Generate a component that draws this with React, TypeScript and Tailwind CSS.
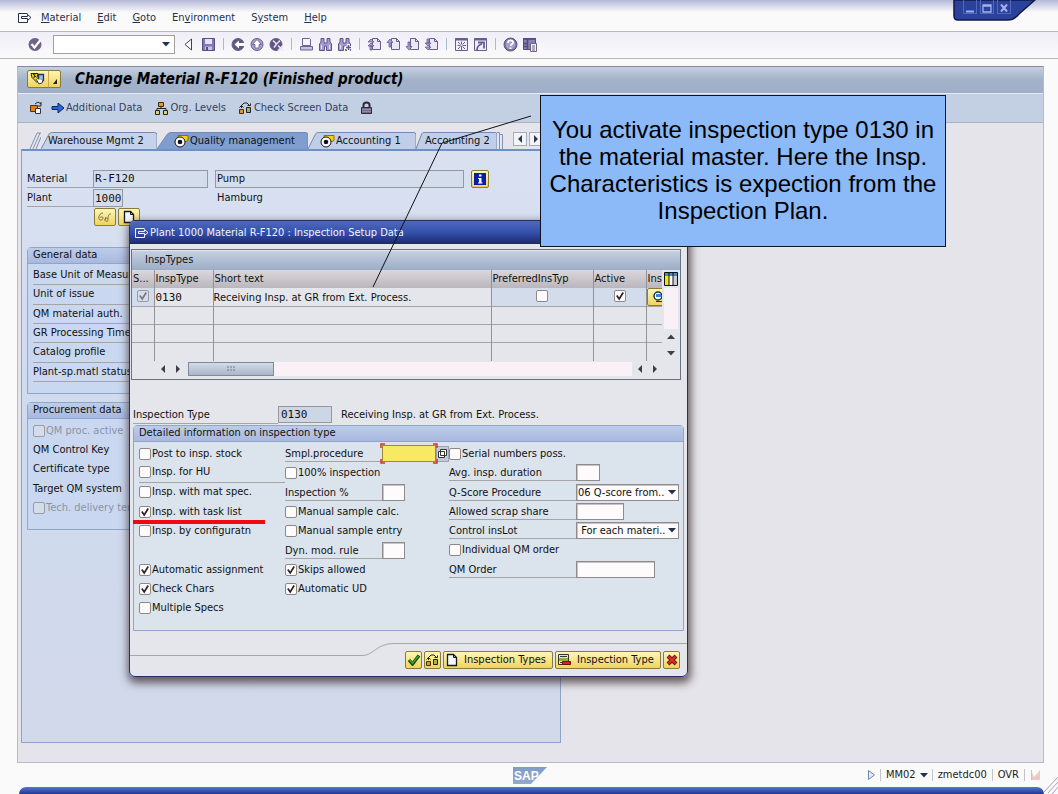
import { useId, useState, type ReactNode } from "react";
import clsx from "clsx";

const Icon = ({ children, w = 15, h = 15, className }: { children: ReactNode; w?: number; h?: number; className?: string }) => (
    <svg width={w} height={h} viewBox={`0 0 ${w} ${h}`} fill="none" className={clsx("shrink-0", className)} aria-hidden="true">
        {children}
    </svg>
);

const ExitIcon = ({ className }: { className?: string }) => (
    <Icon w={14} h={12} className={className}>
        <path d="M9.500 8.500v2h-9v-9h9M3.500 4.500h6v-2l3.500 3-3.500 3v-2h-6z" stroke="currentColor" />
    </Icon>
);

const CheckCircle = () => (
    <Icon>
        <circle cx="7" cy="7.500" r="6.500" fill="#6f6389" />
        <path d="M3.500 7l3 3.500L12.500 3" stroke="#fff" strokeWidth="2.200" />
    </Icon>
);

const Disk = () => (
    <Icon>
        <path d="M1.500 1.500h12v12h-12z" fill="#8478b4" stroke="#584d80" />
        <path d="M4 2h7v5H4z" fill="#e6e2f6" />
        <path d="M4 9.500h7V13H4z" fill="#c9c2e6" />
        <path d="M5 10h2v3H5z" fill="#584d80" />
    </Icon>
);

const NavCircle = ({ kind }: { kind: "back" | "up" | "cancel" }) => (
    <Icon>
        <circle cx="7" cy="7.500" r="6" fill={kind === "up" ? "#aaa0cc" : "#63577f"} stroke="#675b8c" />
        {kind === "back" && <path d="M14 6H8V3.500L3.500 7.500 8 11.500V9h6z" fill="#fff" />}
        {kind === "up" && <path d="M7 2.500L2.500 7.500H5V11h4V7.500h2.500z" fill="#fff" stroke="#675b8c" strokeWidth=".8" />}
        {kind === "cancel" && <path d="M4 3.500l3.500 3.500L11 3.500M7.500 7L5 10.500M9 8.500l5 5M9 13.500l5-5" stroke="#e9e5f7" strokeWidth="1.500" />}
    </Icon>
);

const Printer = () => (
    <Icon>
        <path d="M3.500 1.500h7l1 1v6h-8z" fill="#f6f3fd" stroke="#6f6490" />
        <path d="M1.500 9.500h12v3.500h-12z" fill="#c7bfe3" stroke="#6f6490" />
    </Icon>
);

const Binoculars = ({ plus }: { plus?: boolean }) => (
    <Icon>
        <path d="M3 1.500h3V6h3V1.500h3V5l1.500 2v6.500h-5V9h-2v4.500h-5V7L3 5z" fill="#a79cd0" stroke="#5f5388" />
        <path d="M3.500 8v4M11.500 8v4" stroke="#e8e3f8" />
        {plus && <path d="M11.500 7v7M8 10.500h7" stroke="#fff" strokeWidth="3" />}
        {plus && <path d="M11.500 8v5M9 10.500h5" stroke="#5f5388" strokeWidth="1.500" />}
    </Icon>
);

const PageIcon = ({ kind }: { kind: "first" | "prev" | "next" | "last" }) => (
    <Icon>
        <path d="M5.500 1.500h5l3 3v8h-8z" fill="#ebe7f7" stroke="#695d90" />
        <path d="M10.500 1.500v3h3" stroke="#695d90" />
        {kind === "first" && <path d="M1 5l3-3 3 3zM1 9l3-3 3 3zM3 9h2v4H3z" fill="#a99fd2" stroke="#695d90" strokeWidth=".8" />}
        {kind === "prev" && <path d="M1 5.500L4 2l3 3.500H5V10H3V5.500z" fill="#a99fd2" stroke="#695d90" strokeWidth=".8" />}
        {kind === "next" && <path d="M1 9.500L4 13l3-3.500H5V5H3v4.500z" fill="#a99fd2" stroke="#695d90" strokeWidth=".8" />}
        {kind === "last" && <path d="M1 10l3 3 3-3zM1 6l3 3 3-3zM3 2h2v4H3z" fill="#a99fd2" stroke="#695d90" strokeWidth=".8" />}
    </Icon>
);

const SessionIcon = ({ shortcut }: { shortcut?: boolean }) => (
    <Icon>
        <path d="M1.500 1.500h12v12h-12z" fill="#f1eefa" stroke="#695d90" />
        <path d="M1 2.500h13" stroke="#695d90" strokeWidth="2" />
        {shortcut ? (
            <path d="M4 13c0-3 1-5 5-6M5 5.500h6v6" stroke="#695d90" strokeWidth="1.800" />
        ) : (
            <path d="M7.500 4.500v3M7.500 9v4M3.500 8.500h3M8.500 8.500h3.500M4 5l2.500 2.500M11 5L8.500 7.500M4 12l2.500-2.500M11 12L8.500 9.500" stroke="#695d90" />
        )}
    </Icon>
);

const HelpIcon = () => (
    <Icon>
        <circle cx="7.500" cy="7.500" r="6.500" fill="#7d719f" stroke="#5c5080" />
        <circle cx="7.500" cy="7.500" r="4.800" fill="#a89dcb" />
        <path d="M5 6c0-3.500 5-3.500 5-.5C10 7.500 7.500 7 7.500 9M7.500 10.500V12" stroke="#fff" strokeWidth="1.800" />
    </Icon>
);

const LayoutIcon = () => (
    <Icon>
        <path d="M1.500 1.500h12v11h-12z" fill="#8b7fb9" stroke="#554a78" />
        <path d="M1 2h13M5.500 2v11M2 6.500h3M2 9.500h3" stroke="#554a78" strokeWidth="1.500" />
        <path d="M8.500 6.500h6v8h-6z" fill="#f4f1e6" stroke="#6b6480" />
        <path d="M10 9h3M10 11h3M10 13h3" stroke="#6b6480" />
    </Icon>
);

const HatIcon = () => (
    <Icon w={16} h={14}>
        <path d="M1 1.500h7l-1 4 2 2-2 3-5-5z" fill="#f0d21f" stroke="#2a2a18" />
        <path d="M3 2l3 3M5 1.500L4 6" stroke="#2a2a18" />
        <path d="M8.500 2.500h5v6h-5z" fill="#9cb8e8" stroke="#20335c" strokeWidth="1.300" />
        <path d="M6 7l3 5 3-1 1-3" fill="#fff" stroke="#3c3c3c" />
    </Icon>
);

const OtherMaterialIcon = () => (
    <Icon w={14} h={14}>
        <path d="M1.500 4.500h7v6h-7z" fill="#e0801a" stroke="#5a2f08" />
        <path d="M6.500 7.500h5v5h-5z" fill="#f5f7fa" stroke="#333" />
        <path d="M6 3l3-2 3 2M12 1v4h-3" stroke="#222" />
    </Icon>
);

const ArrowIcon = () => (
    <Icon w={14} h={12}>
        <path d="M1 4.500h6V1l6 5-6 5V7.500H1z" fill="#2a66dc" stroke="#0f245c" />
    </Icon>
);

const OrgIcon = () => (
    <Icon w={15} h={13}>
        <path d="M7 4v3M3 8V6.500h9V8" stroke="#222" />
        <path d="M4.500.5h5v4h-5z" fill="#e69a23" stroke="#3a2a0c" />
        <path d="M1.500 8.500h4v4h-4z" fill="#d9cf7c" stroke="#222" />
        <path d="M9.500 8.500h4v4h-4z" fill="#d9cf7c" stroke="#222" />
    </Icon>
);

const CheckScreenIcon = () => (
    <Icon w={15} h={14}>
        <path d="M1.500 8.500h4v4h-4z" fill="#e0962b" stroke="#4a2d08" />
        <path d="M8.500 6.500h4v5h-4z" fill="#a8b05a" stroke="#222" />
        <path d="M3.500 7V4.500L6 2h3l2.500 2.500M1.500 6.500l2-2 2 2M9.500 4.500h3v-2" stroke="#222" />
    </Icon>
);

const LockIcon = () => (
    <Icon w={13} h={14}>
        <path d="M3.500 7V4c0-3.500 6-3.500 6 0v3" stroke="#2f2a35" strokeWidth="2" />
        <path d="M1.500 6.500h10v6h-10z" fill="#746a8d" stroke="#2f2a35" />
        <path d="M2 8.500h9M2 10.500h9" stroke="#958bab" />
    </Icon>
);

const TabFlag = () => (
    <Icon w={16} h={14}>
        <path d="M4 1.500h10v5l-2 1H5z" fill="#f5cf16" stroke="#8b7004" />
        <circle cx="6" cy="8" r="5" fill="#fff" stroke="#111" />
        <circle cx="6" cy="8" r="2.300" fill="#111" />
    </Icon>
);

const PaperIcon = () => (
    <Icon w={12} h={14}>
        <path d="M1.500 1.500h6l3 3v8h-9z" fill="#f4f8ff" stroke="#16181d" strokeWidth="1.300" />
        <path d="M7.500 1.500v3h3" stroke="#16181d" />
    </Icon>
);

const Triangle = ({ dir, className }: { dir: "down" | "up" | "left" | "right"; className?: string }) => (
    <svg width="8" height="8" viewBox="0 0 8 8" className={clsx("shrink-0 fill-current", className)} aria-hidden="true">
        {dir === "down" && <path d="M0 2h8L4 6.500z" />}
        {dir === "up" && <path d="M0 6h8L4 1.500z" />}
        {dir === "left" && <path d="M6 0v8L2 4z" />}
        {dir === "right" && <path d="M2 0v8l4-4z" />}
    </svg>
);

const Separator = () => <span className="mx-[3px] h-3 w-px bg-[#a9bdd2]" />;

const ToolButton = ({ label, children }: { label: string; children: ReactNode }) => (
    <button type="button" aria-label={label} className="flex h-4 items-center">
        {children}
    </button>
);

const Check = ({ label, checked = false, disabled, hideLabel }: { label: string; checked?: boolean; disabled?: boolean; hideLabel?: boolean }) => {
    const [on, setOn] = useState(checked);
    return (
        <label className={clsx("inline-flex items-center gap-px whitespace-nowrap", disabled && "text-[#8b94a5]")}>
            <span className="grid h-3 w-3 shrink-0 place-items-center">
                <input
                    type="checkbox"
                    checked={on}
                    disabled={disabled}
                    aria-label={hideLabel ? label : undefined}
                    onChange={(e) => setOn(e.target.checked)}
                    className={clsx(
                        "col-start-1 row-start-1 h-3 w-3 appearance-none rounded-xs border",
                        disabled ? "border-[#9a9ba3] bg-[#d5ddea]" : "border-[#8f8686] bg-[#fdfbfc]"
                    )}
                />
                {on && (
                    <svg viewBox="0 0 10 10" className="pointer-events-none col-start-1 row-start-1 h-[10px] w-[10px]" aria-hidden="true">
                        <path d="M1.800 4.500l2.400 3.500 4-6.500" fill="none" stroke={disabled ? "#77777f" : "#2e2229"} strokeWidth="1.700" />
                    </svg>
                )}
            </span>
            {!hideLabel && label}
        </label>
    );
};

const boxClass = "h-[17px] border border-[#8f8a8c] bg-[#fdfbfc] px-1 shadow-[inset_1px_1px_0_#c9c4c6]";
const lineClass = "border-b border-[#a8a3a6]";

const Field = ({ label, labelClass, inputClass }: { label: string; labelClass: string; inputClass: string }) => {
    const id = useId();
    return (
        <div className="flex items-center">
            <label htmlFor={id} className={clsx("h-[17px] leading-[17px]", lineClass, labelClass)}>{label}</label>
            <input id={id} className={clsx(boxClass, inputClass)} />
        </div>
    );
};

const SelectField = ({ label, value }: { label: string; value: string }) => {
    const id = useId();
    return (
        <div className="flex items-center">
            <label htmlFor={id} className={clsx("h-[17px] w-[127px] leading-[17px]", lineClass)}>{label}</label>
            <div className="relative">
                <select id={id} className="block h-[17px] w-[103px] appearance-none border border-[#8f8a8c] bg-[#fdfbfc] pr-[11px] pl-px leading-[15px] shadow-[inset_1px_1px_0_#c9c4c6]">
                    <option>{value}</option>
                </select>
                <Triangle dir="down" className="pointer-events-none absolute top-1 right-[3px] text-[#23304f]" />
            </div>
        </div>
    );
};

const yellowButton = "flex h-[18px] items-center justify-center rounded-xs border border-[#8a7a3c] bg-linear-to-b from-[#fdf6b4] to-[#f0d458]";

const generalRows = ["Base Unit of Measure", "Unit of issue", "QM material auth.", "GR Processing Time", "Catalog profile", "Plant-sp.matl status"];

const GroupBox = ({ title, children, className }: { title: string; children: ReactNode; className?: string }) => (
    <section className={clsx("rounded-t-sm border border-[#8fa5c9]", className)}>
        <h2 className="h-4 border-b border-[#8fa5c9] bg-linear-to-b from-[#bccde9] to-[#a9b8df] px-[5px] leading-[14px]">{title}</h2>
        {children}
    </section>
);

const Tab = ({ label, flag, active, first, className }: { label: string; flag?: boolean; active?: boolean; first?: boolean; className: string }) => (
    <button type="button" role="tab" aria-selected={!!active} className={clsx("relative flex h-[17px] shrink-0 items-center", className)}>
        <svg viewBox="0 0 100 18" preserveAspectRatio="none" className="absolute inset-0 h-full w-full" aria-hidden="true">
            <path
                d="M0 18L7 2Q8 .500 10 .500H98Q100 .500 100 3V18"
                fill={active ? "#7f9ecf" : first ? "#c5d3ea" : "#c0cfe7"}
                stroke="#7088b0"
                vectorEffect="non-scaling-stroke"
            />
        </svg>
        <span className="relative flex items-center">
            {flag && <TabFlag />}
            {label}
        </span>
    </button>
);

const MaterialScreen = () => (
    <div className="flex w-[540px] max-w-full flex-1 flex-col border border-t-2 border-[#8ea4c6] border-t-[#6f90c3] bg-linear-to-b from-[#d9e1f1] via-[#cfdaee] to-[#d1d9ea] px-[5px]">
        <div className="mt-[18px] flex h-[19px] items-center">
            <label htmlFor="material" className={clsx("h-[18px] w-[66px] leading-[18px]", lineClass)}>Material</label>
            <input id="material" readOnly defaultValue="R-F120" className="h-[18px] w-[115px] border border-[#9a979c] bg-[#d4ddeb] px-px font-['DejaVu_Sans_Mono',monospace]" />
            <input aria-label="Description" readOnly defaultValue="Pump" className="ml-[7px] h-[18px] w-[249px] border border-[#9a979c] bg-[#d4ddeb] px-px" />
            <button type="button" aria-label="Information" className={clsx(yellowButton, "ml-[7px] w-[18px]")}>
                <Icon w={12} h={12}>
                    <path d="M0 0h12v12H0z" fill="#0a1fa8" />
                    <path d="M5 1.500h2.500v2H5zM4 5h3.500v4.500h1v1H4v-1h1V6H4z" fill="#fff" />
                </Icon>
            </button>
        </div>
        <div className="flex h-5 items-center">
            <label htmlFor="plant" className={clsx("h-[18px] w-[66px] leading-[18px]", lineClass)}>Plant</label>
            <input id="plant" readOnly defaultValue="1000" className="h-[18px] w-[30px] border border-[#9a979c] bg-[#d4ddeb] px-px font-['DejaVu_Sans_Mono',monospace]" />
            <span className="ml-[94px]">Hamburg</span>
        </div>
        <div className="ml-[67px] flex gap-[2px]">
            <button type="button" aria-label="Display" className={clsx(yellowButton, "w-[22px]")}>
                <Icon w={16} h={12}>
                    <path d="M6 2C3 2 1 6 2 8s4 1 4-1-3-1-3 0M8 9c0 2 3 2 3 0s-3-3-3 0l1-3M11 8c0-4 1-5 3-5" stroke="#777055" />
                </Icon>
            </button>
            <button type="button" aria-label="Create" className={clsx(yellowButton, "w-[22px]")}>
                <PaperIcon />
            </button>
        </div>
        <GroupBox title="General data" className="mt-[21px] h-[147px] bg-[#c9d8f0]">
            <div className="mt-[2px] ml-[5px] grid h-[116px] w-[96px] auto-rows-fr">
                {generalRows.map((row) => (
                    <div key={row} className={clsx("flex items-center overflow-hidden whitespace-nowrap", lineClass)}>{row}</div>
                ))}
            </div>
        </GroupBox>
        <GroupBox title="Procurement data" className="mt-2 h-[128px] bg-[#c9d8f0]">
            <div className="mt-[2px] ml-[5px] grid h-[97px] auto-rows-fr items-center">
                <Check label="QM proc. active" disabled />
                <span>QM Control Key</span>
                <span>Certificate type</span>
                <span>Target QM system</span>
                <Check label="Tech. delivery terms" disabled />
            </div>
        </GroupBox>
    </div>
);

const InspectionTable = () => (
    <div className="mx-[1px] mt-[5px] h-[131px] w-[550px] border border-[#6a7280] py-px">
        <div className="h-[19px] bg-linear-to-b from-[#c6d0e0] to-[#9badc6] pl-[13px] leading-[18px]">InspTypes</div>
        <div className="flex">
            <table className="w-[530px] table-fixed border-collapse text-left">
                <colgroup>
                    <col className="w-[22px]" />
                    <col className="w-[59px]" />
                    <col className="w-[278px]" />
                    <col className="w-[102px]" />
                    <col className="w-[53px]" />
                    <col className="w-4" />
                </colgroup>
                <thead>
                    <tr className="h-[18px] bg-linear-to-b from-[#dbd7dc] to-[#b9b6bd]">
                        {["S...", "InspType", "Short text", "PreferredInsTyp", "Active", "Ins"].map((h) => (
                            <th key={h} className="overflow-hidden border-r border-[#92929a] px-px font-normal whitespace-nowrap last:border-0">{h}</th>
                        ))}
                    </tr>
                </thead>
                <tbody>
                    <tr className="h-[18px] border-b border-[#a3a3aa]">
                        <td className="border-r border-[#92929a] bg-[#d3dcea] text-center leading-none"><Check label="Selected" hideLabel checked disabled /></td>
                        <td className="border-r border-[#92929a] px-px font-['DejaVu_Sans_Mono',monospace] leading-none">0130</td>
                        <td className="border-r border-[#92929a] leading-none">Receiving Insp. at GR from Ext. Process.</td>
                        <td className="border-r border-[#92929a] bg-[#d3dcea] text-center leading-none"><Check label="Preferred" hideLabel /></td>
                        <td className="border-r border-[#92929a] bg-[#d3dcea] text-center leading-none"><Check label="Active" hideLabel checked /></td>
                        <td className="overflow-hidden leading-none">
                            <button type="button" aria-label="Details" className={clsx(yellowButton, "h-4 w-5 justify-start pl-1")}>
                                <Icon w={14} h={14}>
                                    <circle cx="6" cy="6" r="4" fill="#fff" stroke="#16324a" strokeWidth="1.500" />
                                    <path d="M4 4h5v3H4z" fill="#3a86c8" />
                                    <path d="M4 11.500h6" stroke="#16324a" />
                                </Icon>
                            </button>
                        </td>
                    </tr>
                    {[1, 2, 3].map((n) => (
                        <tr key={n} className="h-[18px] border-b border-[#a3a3aa] last:border-0">
                            <td className="border-r border-[#92929a]" />
                            <td className="border-r border-[#92929a]" />
                            <td className="border-r border-[#92929a]" />
                            <td className="border-r border-[#92929a]" />
                            <td className="border-r border-[#92929a]" />
                            <td />
                        </tr>
                    ))}
                </tbody>
            </table>
            <div className="ml-[2px] flex w-[14px] flex-col items-center text-[#3d3f48]">
                <button type="button" aria-label="Configure columns" className="flex h-[18px] items-center">
                    <Icon w={14} h={14}>
                        <path d="M.500.500h13v13H.500z" fill="#fff" stroke="#111" />
                        <path d="M1 1h12v3H1z" fill="#4a86c6" />
                        <path d="M1 4h4v9H1z" fill="#f2e21c" />
                        <path d="M9 4h4v9H9z" fill="#c8ccd8" />
                        <path d="M5 1v12M9 1v12" stroke="#111" />
                    </Icon>
                </button>
                <div className="w-full flex-1 bg-[#faf1f7]" />
                <button type="button" aria-label="Scroll up" className="flex h-4 items-center"><Triangle dir="up" /></button>
                <button type="button" aria-label="Scroll down" className="flex h-4 items-center"><Triangle dir="down" /></button>
            </div>
        </div>
        <div className="mt-px mr-[18px] flex h-[14px] items-center pl-[23px] text-[#3d3f48]">
            <button type="button" aria-label="First column" className="flex w-[15px] justify-center"><Triangle dir="left" /></button>
            <button type="button" aria-label="Column left" className="flex w-[15px] justify-center"><Triangle dir="right" /></button>
            <div className="ml-[3px] flex h-[14px] flex-1 bg-[#faf1f7]">
                <div className="flex w-[86px] items-center justify-center border border-[#80899a] bg-linear-to-b from-[#d3dbe6] to-[#a9b7ca]">
                    <Icon w={8} h={5}>
                        <path d="M0 1h8M0 4h8" stroke="#6c7a92" strokeDasharray="2 1" />
                    </Icon>
                </div>
            </div>
            <button type="button" aria-label="Column right" className="flex w-[15px] justify-center"><Triangle dir="left" /></button>
            <button type="button" aria-label="Last column" className="flex w-[15px] justify-center"><Triangle dir="right" /></button>
        </div>
    </div>
);

const InspectionDialog = () => (
    <div role="dialog" aria-label="Inspection Setup Data" className="absolute top-[220px] left-[129px] flex h-[457px] w-[559px] flex-col overflow-hidden rounded-md border border-[#25315f] bg-[#e5e6eb]">
        <div className="flex h-[23px] shrink-0 items-center gap-px bg-linear-to-b from-[#5069bd] via-[#3450aa] to-[#1c2a6e] pl-[5px] text-[#f1f3fb]">
            <ExitIcon />
            Plant 1000 Material R-F120 : Inspection Setup Data
        </div>
        <InspectionTable />
        <div className="mt-[25px] ml-[3px] flex h-[19px] items-center">
            <label htmlFor="insp-type" className={clsx("h-[18px] w-[145px] leading-[18px]", lineClass)}>Inspection Type</label>
            <input id="insp-type" readOnly defaultValue="0130" className="h-[17px] w-[54px] border border-[#9a979c] bg-[#ccd6e5] px-[2px] font-['DejaVu_Sans_Mono',monospace]" />
            <span className="ml-[9px]">Receiving Insp. at GR from Ext. Process.</span>
        </div>
        <div className="relative mx-[3px] mt-px">
            <GroupBox title="Detailed information on inspection type" className="h-[206px] bg-[#dbe3ec]">
                <div className="mt-[2px] ml-[5px] grid grid-cols-[146px_164px_1fr]">
                    <div className="grid h-[174px] grid-rows-9 items-center">
                        <Check label="Post to insp. stock" />
                        <div className={clsx("flex items-center self-stretch", lineClass)}><Check label="Insp. for HU" /></div>
                        <Check label="Insp. with mat spec." />
                        <Check label="Insp. with task list" checked />
                        <Check label="Insp. by configuratn" />
                        <span />
                        <Check label="Automatic assignment" checked />
                        <Check label="Check Chars" checked />
                        <Check label="Multiple Specs" />
                    </div>
                    <div className="grid h-[174px] grid-rows-9 items-center">
                        <div className="flex items-center">
                            <label htmlFor="smpl" className={clsx("h-[17px] w-[97px] leading-[17px]", lineClass)}>Smpl.procedure</label>
                            <div className="relative flex">
                                <input id="smpl" className="h-[17px] w-[54px] border border-[#a5843a] bg-[#f8e965] px-1" />
                                <svg viewBox="0 0 58 21" className="pointer-events-none absolute -top-[2px] -left-[2px] h-[21px] w-[58px]" aria-hidden="true">
                                    <path d="M5 1H1v4M53 1h4v4M5 20H1v-4M53 20h4v-4" fill="none" stroke="#d8332c" strokeWidth="1.500" />
                                </svg>
                            </div>
                            <button type="button" aria-label="Search help" className="flex h-4 w-[13px] items-center justify-center border border-[#9da3b5] bg-[#c2c9d8]">
                                <Icon w={11} h={11}>
                                    <path d="M3.500 1.500h6v6h-6zM1.500 3.500h6v6h-6z" fill="#fff" stroke="#333" />
                                </Icon>
                            </button>
                        </div>
                        <Check label="100% inspection" />
                        <Field label="Inspection %" labelClass="w-[97px]" inputClass="w-[23px]" />
                        <Check label="Manual sample calc." />
                        <Check label="Manual sample entry" />
                        <Field label="Dyn. mod. rule" labelClass="w-[97px]" inputClass="w-[23px]" />
                        <Check label="Skips allowed" checked />
                        <Check label="Automatic UD" checked />
                    </div>
                    <div className="grid h-[174px] grid-rows-9 items-center">
                        <Check label="Serial numbers poss." />
                        <Field label="Avg. insp. duration" labelClass="w-[127px]" inputClass="w-6" />
                        <SelectField label="Q-Score Procedure" value="06 Q-score from.." />
                        <Field label="Allowed scrap share" labelClass="w-[127px]" inputClass="w-12" />
                        <SelectField label="Control insLot" value={"\u00a0For each materi.."} />
                        <Check label="Individual QM order" />
                        <Field label="QM Order" labelClass="w-[127px]" inputClass="w-[79px]" />
                    </div>
                </div>
            </GroupBox>
            {/* highlight under the task list option */}
            <span className="absolute top-[95px] left-0 h-1 w-[132px] bg-[#ee0a0e]" />
        </div>
        <div className="relative flex flex-1 items-center justify-end gap-[2px] pt-3 pr-[7px]">
            <svg viewBox="0 0 557 14" preserveAspectRatio="none" className="absolute top-3 left-0 h-[14px] w-full" aria-hidden="true">
                <path d="M0 12.500h232c12 0 14-12 32-12h293" fill="none" stroke="#a3a7b0" />
            </svg>
            <button type="button" aria-label="Continue" className={clsx(yellowButton, "relative w-[17px]")}>
                <Icon w={14} h={13}>
                    <path d="M2 7l3.500 4L12 2.500" stroke="#1e4d12" strokeWidth="3.400" />
                    <path d="M2.500 7l3 3.200L11.500 3" stroke="#3fa32c" strokeWidth="1.400" />
                </Icon>
            </button>
            <button type="button" aria-label="Check" className={clsx(yellowButton, "relative w-[17px]")}>
                <CheckScreenIcon />
            </button>
            <button type="button" className={clsx(yellowButton, "relative w-[110px] justify-start gap-[6px] pl-[2px]")}>
                <PaperIcon />
                Inspection Types
            </button>
            <button type="button" className={clsx(yellowButton, "relative w-[106px] justify-start gap-[6px] pl-px")}>
                <Icon w={14} h={14}>
                    <path d="M1.500 1.500h10v10h-10z" fill="#dbe7e8" stroke="#333" />
                    <path d="M3 3.500h7M3 9.500h3" stroke="#333" />
                    <path d="M2 5h9v3H2z" fill="#8daf3d" />
                    <path d="M5.500 8.500h8v3h-8z" fill="#d7241e" stroke="#70100d" />
                </Icon>
                Inspection Type
            </button>
            <button type="button" aria-label="Cancel" className={clsx(yellowButton, "relative w-[17px]")}>
                <Icon w={12} h={12}>
                    <path d="M2 2l8 8M10 2l-8 8" stroke="#6d0e10" strokeWidth="4" />
                    <path d="M2.500 2.500l7 7M9.500 2.500l-7 7" stroke="#e0302c" strokeWidth="2" />
                </Icon>
            </button>
        </div>
    </div>
);

const menus = [
    ["", "M", "aterial"],
    ["", "E", "dit"],
    ["", "G", "oto"],
    ["En", "v", "ironment"],
    ["S", "y", "stem"],
    ["", "H", "elp"],
];

const actionClass = "flex items-center gap-px text-[#33405c]";

export default function App() {
    return (
        <div className="relative flex min-h-screen flex-col overflow-hidden bg-[#fbfafa] font-['DejaVu_Sans_Condensed','DejaVu_Sans',sans-serif] text-[11px] leading-[14px] text-[#111]">
            <nav className="flex h-8 items-center gap-4 border-b border-[#bcb9be] bg-linear-to-b from-[#b4b9d8] via-[#fbfafa] via-40% to-[#fbfafa] pt-1 pl-[18px] text-[#26304a]">
                <ExitIcon className="-mr-[7px]" />
                {menus.map(([before, key, after]) => (
                    <a key={key} href="#">
                        {before}<u>{key}</u>{after}
                    </a>
                ))}
            </nav>

            <div className="flex h-[27px] items-center gap-1 border-b border-[#bcb9be] bg-linear-to-b from-[#efedf7] to-[#fbfafa] pb-[2px] pl-[28px]">
                <ToolButton label="Enter"><CheckCircle /></ToolButton>
                <div className="mr-1 ml-[6px] flex h-[19px] w-[122px] items-center border border-[#a39f98] bg-white pr-1">
                    <input aria-label="Command" className="min-w-0 flex-1 px-1" />
                    <button type="button" aria-label="History" className="text-[#23304f]"><Triangle dir="down" /></button>
                </div>
                <ToolButton label="Hide command field">
                    <Icon w={10} h={13} className="mr-1"><path d="M8.500 1v11L2 6.500z" fill="#fdfdfd" stroke="#444" /></Icon>
                </ToolButton>
                <ToolButton label="Save"><Disk /></ToolButton>
                <Separator />
                <ToolButton label="Back"><NavCircle kind="back" /></ToolButton>
                <ToolButton label="Exit"><NavCircle kind="up" /></ToolButton>
                <ToolButton label="Cancel"><NavCircle kind="cancel" /></ToolButton>
                <Separator />
                <ToolButton label="Print"><Printer /></ToolButton>
                <ToolButton label="Find"><Binoculars /></ToolButton>
                <ToolButton label="Find next"><Binoculars plus /></ToolButton>
                <Separator />
                <ToolButton label="First page"><PageIcon kind="first" /></ToolButton>
                <ToolButton label="Previous page"><PageIcon kind="prev" /></ToolButton>
                <ToolButton label="Next page"><PageIcon kind="next" /></ToolButton>
                <ToolButton label="Last page"><PageIcon kind="last" /></ToolButton>
                <Separator />
                <ToolButton label="New session"><SessionIcon /></ToolButton>
                <ToolButton label="Create shortcut"><SessionIcon shortcut /></ToolButton>
                <Separator />
                <ToolButton label="Help"><HelpIcon /></ToolButton>
                <ToolButton label="Customize layout"><LayoutIcon /></ToolButton>
            </div>

            <main className="mt-[7px] mr-[14px] ml-[17px] flex flex-1 flex-col border border-[#b9b9c8] border-t-[#8a84a4] bg-[#e5e4ea]">
                <header className="flex h-[27px] items-center gap-[14px] border-b border-[#e6ecf4] bg-linear-to-b from-[#c5d0e2] via-[#a3b2c7] to-[#a0aecb] pb-[3px] pl-[9px]">
                    <button type="button" aria-label="Services" className={clsx(yellowButton, "w-[34px] gap-[2px]")}>
                        <HatIcon />
                        <span className="h-full w-px bg-[#c9ac4c]" />
                        <Icon w={8} h={12}><path d="M6 6v5H2z" fill="#222" /></Icon>
                    </button>
                    <h1 className="text-[15px] leading-[18px] font-bold whitespace-nowrap text-black italic">Change Material R-F120 (Finished product)</h1>
                </header>
                <div className="flex h-[29px] items-center border-b border-[#a8b4c6] bg-[#c3d0e4] pl-[11px]">
                    <button type="button" aria-label="Other material" className="mr-2"><OtherMaterialIcon /></button>
                    <button type="button" className={actionClass}><ArrowIcon />Additional Data</button>
                    <button type="button" className={clsx(actionClass, "ml-3")}><OrgIcon />Org. Levels</button>
                    <button type="button" className={clsx(actionClass, "ml-3")}><CheckScreenIcon />Check Screen Data</button>
                    <button type="button" aria-label="Lock" className="ml-3"><LockIcon /></button>
                </div>

                <div className="flex flex-1 flex-col pb-[19px] pl-[3px]">
                    <div role="tablist" className="mt-[9px] flex items-end">
                        <Icon w={12} h={17} className="ml-2">
                            <path d="M1 17L8 1h4M4 17L11 1M7 17L12 5" stroke="#7f93b5" />
                        </Icon>
                        <Tab label="Warehouse Mgmt 2" first className="w-[116px] pl-[7px]" />
                        <Tab label="Quality management" flag active className="w-[151px] pl-[17px]" />
                        <Tab label="Accounting 1" flag className="w-[108px] pl-[12px]" />
                        <Tab label="Accounting 2" className="w-[81px] pl-[9px]" />
                        <Icon w={6} h={17}>
                            <path d="M0 .500h2.500V17M2.500 2.500h3V17" stroke="#7f93b5" />
                        </Icon>
                        <div className="mb-[3px] ml-[10px] flex gap-[2px] text-[#333b4c]">
                            <button type="button" aria-label="Previous tab" className="flex h-[14px] w-[14px] items-center justify-center border border-[#a3aec2] bg-[#f2f4f9]"><Triangle dir="left" /></button>
                            <button type="button" aria-label="Next tab" className="flex h-[14px] w-[14px] items-center justify-center border border-[#a3aec2] bg-[#f2f4f9]"><Triangle dir="right" /></button>
                        </div>
                    </div>
                    <MaterialScreen />
                </div>
            </main>

            <footer className="relative flex h-6 items-center justify-end gap-1 pr-4 text-[#1b1b22]">
                <svg viewBox="0 0 35 17" className="absolute top-1 left-[513px] h-[17px] w-[35px]" aria-label="SAP">
                    <defs>
                        <linearGradient id="sap" x1="0" y1="0" x2="0" y2="1">
                            <stop offset="0" stopColor="#7f9cc9" />
                            <stop offset="1" stopColor="#93a9cc" />
                        </linearGradient>
                    </defs>
                    <path d="M0 0h34L18 17H0z" fill="url(#sap)" />
                    <text x="1" y="13" fontSize="12" fontWeight="bold" fontFamily="Liberation Sans, sans-serif" fill="#fff">SAP</text>
                </svg>
                <button type="button" aria-label="Expand status">
                    <Icon w={9} h={12}><path d="M1.500 1.500v9l6-4.500z" fill="#e4ecf8" stroke="#7286ab" /></Icon>
                </button>
                <span className="mr-px h-3 w-px bg-[#c5c3c8]" />
                <span>MM02</span>
                <Triangle dir="down" className="text-[#23304f]" />
                <span className="mr-px h-3 w-px bg-[#c5c3c8]" />
                <span>zmetdc00</span>
                <span className="mx-px h-3 w-px bg-[#c5c3c8]" />
                <span>OVR</span>
                <span className="mx-px h-3 w-px bg-[#c5c3c8]" />
                <Icon w={12} h={12}>
                    <path d="M1 1v10h9V1L4 8z" fill="#ecc9c6" />
                    <path d="M1.500 1v10" stroke="#c9c4cc" />
                </Icon>
                <svg viewBox="0 0 14 18" className="absolute right-0 -bottom-[7px] h-[18px] w-[14px]" aria-hidden="true">
                    <path d="M0 16L14 1M4 17L14 6M8 18L14 11" stroke="#a6a0b4" fill="none" />
                </svg>
            </footer>
            <div className="mr-[14px] ml-[19px] h-[7px] rounded-t-xl bg-linear-to-b from-[#5a76cc] to-[#1d3794]" />

            <div className="absolute top-0 right-[22px] flex h-[21px] w-[83px] items-start gap-[3px] pl-[10px] text-[#9fb2f0]">
                <svg viewBox="0 0 83 21" className="absolute inset-0 h-full w-full" aria-hidden="true">
                    <path d="M1 0v16q0 4 4 4h50q6 0 11-6L82 0z" fill="#2b429c" stroke="#111a45" strokeWidth="1.500" />
                </svg>
                <button type="button" aria-label="Minimize" className="relative h-[14px] w-[14px] border border-t-0 border-[#5169bd]">
                    <Icon w={12} h={12}><path d="M2 10.500h8" stroke="currentColor" strokeWidth="2" /></Icon>
                </button>
                <button type="button" aria-label="Maximize" className="relative h-[14px] w-[14px] border border-t-0 border-[#5169bd]">
                    <Icon w={12} h={12}><path d="M2 4h8v7H2zM2 5h8" stroke="currentColor" strokeWidth="1.300" /></Icon>
                </button>
                <button type="button" aria-label="Close" className="relative h-[14px] w-[14px] border border-t-0 border-[#5169bd]">
                    <Icon w={12} h={12}><path d="M3 3.500l6 7M9 3.500l-6 7" stroke="currentColor" strokeWidth="2" /></Icon>
                </button>
            </div>

            <div className="absolute top-[220px] left-[129px] h-[457px] w-[559px] rounded-md shadow-[1px_4px_8px_2px_rgba(60,45,50,0.75)]" />
            <InspectionDialog />

            <svg viewBox="0 0 160 174" className="pointer-events-none absolute top-[115px] left-[372px] h-[174px] w-[160px]" aria-hidden="true">
                <path d="M159 1L70 28 1 172" fill="none" stroke="#111" />
            </svg>
            <aside className="absolute top-[95px] left-[540px] flex h-[152px] w-[406px] items-center justify-center border border-[#0c1524] bg-[#8cb9f8] pb-[2px] text-center font-['Liberation_Sans',Arial,sans-serif] text-[24px] leading-[27px] text-black">
                <p>
                    You activate inspection type 0130 in<br />
                    the material master. Here the Insp.<br />
                    Characteristics is expection from the<br />
                    Inspection Plan.
                </p>
            </aside>
        </div>
    );
}
